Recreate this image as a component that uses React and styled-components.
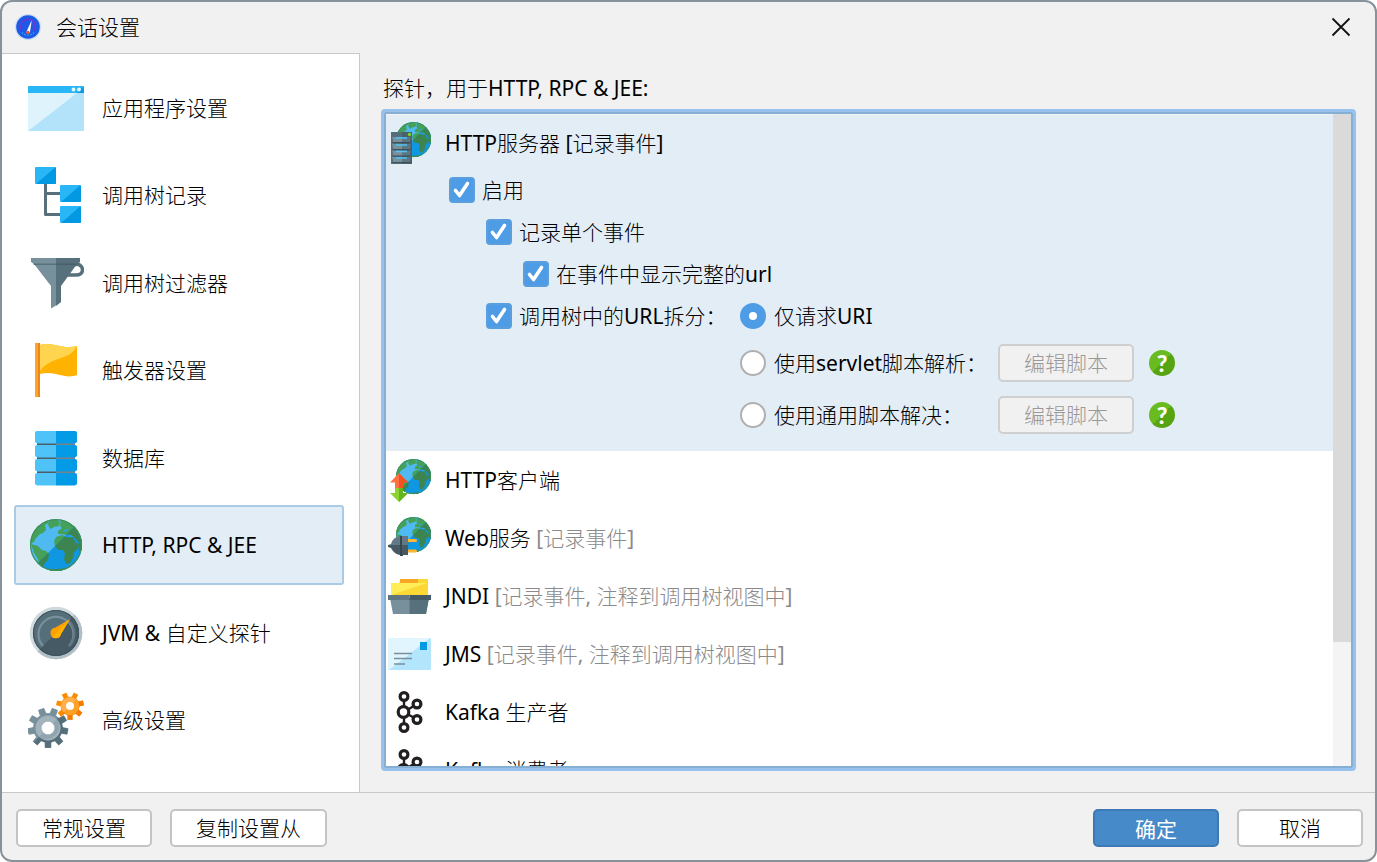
import React, { useId } from "react";
import styled, { createGlobalStyle, css } from "styled-components";

const GlobalStyle = createGlobalStyle`
  *, *::before, *::after { box-sizing: border-box; }
  body {
    margin: 0;
    background: #fff;
    color: #000;
    font: 400 21px/28px "Noto Sans", "Noto Sans CJK SC Light", "Noto Sans CJK SC", sans-serif;
  }
  button, input { font: inherit; color: inherit; margin: 0; }
`;

/* ---------- layout ---------- */

const Dialog = styled.div`
  display: flex;
  flex-direction: column;
  height: 100vh;
  overflow: hidden;
  background: #f1f1f1;
  border: 2px solid #87929a;
  border-radius: 12px;
`;

const TitleBar = styled.header`
  display: flex;
  align-items: center;
  gap: 15px;
  height: 51px;
  flex: none;
  padding: 0 24px 2px 13px;
`;

const Title = styled.h1`
  flex: 1;
  margin: 0;
  font-size: 21px;
  font-weight: inherit;
`;

const CloseButton = styled.button`
  display: grid;
  padding: 0;
  border: 0;
  background: none;
`;

const Body = styled.div`
  display: flex;
  flex: 1;
  min-height: 0;
`;

const Sidebar = styled.nav`
  display: flex;
  flex-direction: column;
  justify-content: space-between;
  flex: none;
  width: 358px;
  padding: 14px 15px 32px 12px;
  background: #fff;
  border: solid #c9c9c9;
  border-width: 1px 1px 0 0;
`;

const NavItem = styled.a`
  display: flex;
  align-items: center;
  gap: 18px;
  height: 80px;
  padding-left: 12px;
  border: 2px solid transparent;
  border-radius: 3px;
  color: inherit;
  text-decoration: none;
  ${(p) => p.$active && css`
    background: #e3edf6;
    border-color: #a9cbe5;
  `}
`;

const Main = styled.main`
  display: flex;
  flex-direction: column;
  flex: 1;
  min-width: 0;
  padding: 21px 19px 21px 21px;
`;

const Caption = styled.h2`
  margin: 0 0 7px;
  padding-left: 2px;
  font-size: 21px;
  font-weight: inherit;
`;

const ProbePanel = styled.div`
  display: flex;
  flex: 1;
  min-height: 0;
  background: #fff;
  border: 3px solid #97c2ec;
  border-radius: 4px;
  padding: 2px;
  box-shadow: inset 0 0 0 2px #86afd6;
`;

const ProbeList = styled.div`
  flex: 1;
  overflow: hidden;
`;

const Scrollbar = styled.div`
  width: 18px;
  background: #f4f4f4;
`;

const ScrollThumb = styled.div`
  height: 81%;
  background: #dadada;
`;

const ProbeRow = styled.div`
  display: flex;
  align-items: center;
  gap: 14px;
  height: 58px;
  padding-left: 2px;
`;

const SelectedProbe = styled.section`
  padding-bottom: 10px;
  background: #e3edf6;
  border-top: 1px solid #f4f4f4;
  ${ProbeRow} { height: 54px; padding-top: 2px; }
`;

const Hint = styled.span`
  color: #8a8a8a;
`;

const Options = styled.div`
  padding-left: 63px;
`;

const OptionRow = styled.div`
  display: flex;
  align-items: center;
  height: 42px;
  padding-left: ${(p) => (p.$level || 0) * 37}px;
`;

const SplitGrid = styled.div`
  display: grid;
  grid-template-columns: 254px 258px auto auto 1fr;
  grid-template-rows: 42px 52px 52px;
  align-items: center;
  padding-left: 37px;
`;

const Label = styled.label`
  display: inline-flex;
  align-items: center;
  gap: 7px;
  white-space: nowrap;
`;

const RadioCell = styled.div`
  display: flex;
  grid-column: 2;
  ${Label} { gap: 8px; }
`;

const Control = styled.span`
  display: grid;
  > * { grid-area: 1 / 1; }
  > svg { pointer-events: none; }
`;

const CheckInput = styled.input`
  appearance: none;
  width: 26px;
  height: 26px;
  background: #fff;
  border: 2px solid #b0b0b0;
  border-radius: 4px;
  &:checked { background: #4e9be6; border-color: #5a9edd; }
  &:not(:checked) + svg { display: none; }
`;

const RadioInput = styled.input`
  appearance: none;
  width: 26px;
  height: 26px;
  background: #fff;
  border: 2px solid #b0b0b0;
  border-radius: 50%;
  &:checked { border: 9px solid #4e9be6; }
`;

const Button = styled.button`
  height: 38px;
  min-width: 126px;
  padding: 0 24px;
  white-space: nowrap;
  background: #fff;
  border: 2px solid #c4c4c4;
  border-radius: 5px;
  &:disabled { background: #f1f1f1; border-color: #cfcfcf; color: #999; }
  ${(p) => p.$primary && css`
    background: #478ac9;
    border-color: #3d79b3;
    color: #fff;
    font-family: "Noto Sans CJK SC", sans-serif;
  `}
`;

const HelpButton = styled.button`
  width: 26px;
  height: 26px;
  margin-left: 15px;
  padding: 0;
  border: 0;
  border-radius: 50%;
  background: linear-gradient(135deg, #6abb1f 50%, #56a412 50%);
  color: #fff;
  font: 900 23px/26px Lato, sans-serif;
`;

const Footer = styled.footer`
  display: flex;
  align-items: center;
  gap: 18px;
  height: 68px;
  flex: none;
  padding: 2px 12px 0 14px;
  border-top: 1px solid #c9c9c9;
`;

const Spacer = styled.div`
  flex: 1;
`;

/* ---------- icons ---------- */

const Svg = ({ size, children }) => (
  <svg width={size} height={size} viewBox={`0 0 ${size} ${size}`} aria-hidden="true" style={{ flex: "none" }}>
    {children}
  </svg>
);

const LAND =
  "M0 25 1 17 5 9 11 3 18 0 18 4 15 6 16 11 13 14 10 15 6 19 4 23Z" +
  "M19 1 26 0 30 3 29 7 24 8 21 10 19 8 18 5Z" +
  "M1 25 8 27 12 31 16 32 19 35 18 41 14 45 12 51 9 45 8 40 4 34Z" +
  "M31 0 40 2 48 9 53 20 53 30 49 33 49 24 45 19 39 18 40 15 36 16 31 15 28 15 28 12 32 9 30 7Z" +
  "M26 18 32 16 36 18 43 19 46 24 50 25 48 30 44 33 43 39 40 44 36 45 34 40 35 35 33 31 28 31 25 27 24 22Z" +
  "M14 51 26 50 40 49 36 53 14 53Z";

function Globe() {
  const id = useId();
  return (
    <>
      <clipPath id={`${id}c`}><circle cx="26" cy="26" r="26" /></clipPath>
      <clipPath id={`${id}d`}><path d="M52 0V52H0Z" /></clipPath>
      <g clipPath={`url(#${id}c)`}>
        <path d="M0 0H52V52H0Z" fill="#4fbaf2" />
        <path d={LAND} fill="#45a05a" />
        <g clipPath={`url(#${id}d)`}>
          <path d="M0 0H52V52H0Z" fill="#0f97e2" />
          <path d={LAND} fill="#3c8550" />
        </g>
        <path d="M33 12l3-2 3 0-4 3zM36 17l5-1 3 2-5 0z" fill="#2aa4e8" />
      </g>
      <circle cx="26" cy="26" r="25.4" fill="none" stroke="#3f9158" strokeWidth="1.2" />
    </>
  );
}

function gear(cx, cy, outer, inner, teeth) {
  const pts = [];
  const step = (Math.PI * 2) / teeth;
  for (let i = 0; i < teeth; i += 1) {
    const a = Math.PI / 2 + i * step;
    [[-0.29, inner], [-0.2, outer], [0.2, outer], [0.29, inner]].forEach(([k, r]) => {
      pts.push(`${(cx + r * Math.cos(a + k * step)).toFixed(2)} ${(cy + r * Math.sin(a + k * step)).toFixed(2)}`);
    });
  }
  return `M${pts.join("L")}Z`;
}

const AppLogo = () => (
  <Svg size={26}>
    <circle cx="13" cy="13" r="13" fill="#c9def3" />
    <circle cx="13" cy="13" r="11.8" fill="#1f5ae6" />
    <path d="M6.5 16a7.3 7.3 0 1 1 13 0" fill="none" stroke="#7a30cf" strokeWidth="1.4" />
    <path d="M7 18.500a8 8 0 0 0 12 0" fill="none" stroke="#25a9e8" strokeWidth="1.4" strokeDasharray="1.5 1.500" />
    <path d="M11.200 18.500 16.800 6 14.800 19Z" fill="#fff" />
    <circle cx="13" cy="18.500" r="1.700" fill="#f1522d" />
  </Svg>
);

const WindowIcon = () => (
  <Svg size={56}>
    <path d="M0 7a1 1 0 0 1 1-1H55a1 1 0 0 1 1 1V13H0Z" fill="#29b6f6" />
    <path d="M49 13 56 6.500V13Z" fill="#0b9be6" />
    <path d="M0 13H56V51H0Z" fill="#b3e3fb" />
    <path d="M0 13H49L0 51Z" fill="#dff3fd" />
    <circle cx="45.500" cy="9.500" r="1.900" fill="#e5f6fe" />
    <circle cx="51" cy="9.500" r="1.900" fill="#e5f6fe" />
  </Svg>
);

const TreeIcon = () => (
  <Svg size={56}>
    <path d="M17.500 16V47.500H34M17.500 26.500H34" fill="none" stroke="#58707c" strokeWidth="3" strokeLinejoin="round" />
    {[[7, 0], [32, 18], [32, 39]].map(([x, y]) => (
      <g key={`${x}${y}`} transform={`translate(${x} ${y})`}>
        <rect width="21" height="17" rx="1" fill="#29b6f6" />
        <path d="M20 .500 21 1V16a1 1 0 0 1-1 1H1Z" fill="#0398e2" />
      </g>
    ))}
  </Svg>
);

const FilterIcon = () => (
  <Svg size={56}>
    <path d="M46 10c4-2.500 8.500 1 8.500 4.700S51.500 20 48 20H39" fill="none" stroke="#56707c" strokeWidth="3.500" />
    <path d="M3 3H28V50.500L23 53.500V31L6 9 3 7Z" fill="#78909c" />
    <path d="M28 3H52V7L49 9 33 31V47L28 51Z" fill="#56707c" />
    <path d="M5 8.500H28V10H6Z" fill="#56707c" />
    <path d="M28 8.500H49L48 10H28Z" fill="#48606c" />
  </Svg>
);

const FlagIcon = () => (
  <Svg size={56}>
    <path d="M12 3C26-1 32 8 49 4V33C36 38 27 28 12 32Z" fill="#ffb300" />
    <path d="M12 3C26-1 32 8 49 4C42 19 22 14 12 29Z" fill="#ffd54f" />
    <path d="M7 1H10V55H7Z" fill="#f9a825" />
    <path d="M10 1H12V55H10Z" fill="#f5821f" />
  </Svg>
);

const DatabaseIcon = () => (
  <Svg size={56}>
    <path d="M9 10H28V50H9Z" fill="#4a5f6a" />
    <path d="M28 10H47V50H28Z" fill="#78838a" />
    {[1, 15, 29, 43].map((y) => (
      <g key={y} transform={`translate(7 ${y})`}>
        <path d="M21 0V12.500H2L0 11V1.500Q0 0 2 0Z" fill="#4fc3f7" />
        <path d="M21 0V12.500H40L42 11V1.500Q42 0 40 0Z" fill="#039be5" />
      </g>
    ))}
  </Svg>
);

const GlobeIcon = () => (
  <Svg size={56}><g transform="translate(2 2)"><Globe /></g></Svg>
);

const GaugeIcon = () => (
  <Svg size={56}>
    <circle cx="28" cy="28" r="26.300" fill="#cfd8dc" />
    <path d="M46.600 9.400a26.300 26.300 0 0 1-37.200 37.200Z" fill="#b0bec5" />
    <circle cx="28" cy="28" r="23" fill="#546e7a" />
    <path d="M44.300 11.700a23 23 0 0 1-32.600 32.600Z" fill="#455a64" />
    <circle cx="28" cy="28" r="22.500" fill="none" stroke="#3f525c" strokeWidth="1.200" />
    <path d="M15 41A17.500 17.500 0 1 1 41 41" fill="none" stroke="#78909c" strokeWidth="2.200" />
    <path d="M41 16A17.500 17.500 0 0 1 41 41" fill="none" stroke="#607985" strokeWidth="2.200" />
    <path d="M42 14 33 29A5.300 5.300 0 1 1 27 22.800Z" fill="#ffa000" />
    <path d="M42 14 33 29A5.300 5.300 0 0 1 24.500 32Z" fill="#ffb300" />
  </Svg>
);

const GearsIcon = () => {
  const id = useId();
  return (
    <Svg size={56}>
      <clipPath id={id}><path d="M0 56 40 16 56 56Z" /></clipPath>
      <clipPath id={`${id}s`}><path d="M28 28 56 0V28Z" /></clipPath>
      <path d={gear(20, 36, 20, 14.500, 9)} fill="#78909c" stroke="#78909c" strokeLinejoin="round" />
      <path d={gear(20, 36, 20, 14.500, 9)} fill="#546e7a" clipPath={`url(#${id})`} />
      <circle cx="20" cy="36" r="9.500" fill="none" stroke="#a3b3bb" strokeWidth="6" />
      <path d="M29 27a13 13 0 0 1-18 18l4-4a7 7 0 0 0 10-10Z" fill="#90a4ae" />
      <circle cx="20" cy="36" r="6.500" fill="#fff" />
      <path d={gear(42, 14, 14, 9.500, 7)} fill="#fb8c00" />
      <path d={gear(42, 14, 14, 9.500, 7)} fill="#f57c00" clipPath={`url(#${id}s)`} />
      <circle cx="42" cy="14" r="6.500" fill="none" stroke="#ffb04d" strokeWidth="5" />
      <path d="M48.400 7.600a9 9 0 0 1-12.800 12.800l3.500-3.500a4 4 0 0 0 5.800-5.800Z" fill="#ffa026" />
      <circle cx="42" cy="14" r="4" fill="#fff" />
    </Svg>
  );
};

const SmallGlobe = () => <g transform="translate(8 0) scale(.675)"><Globe /></g>;

const ServerIcon = () => (
  <Svg size={43}>
    <SmallGlobe />
    <path d="M3 10H24V42H3Z" fill="#546e7a" />
    <path d="M14 10H24V42H14Z" fill="#4a616c" />
    {[15, 22, 28.500, 35].map((y) => (
      <g key={y}>
        <path d={`M4 ${y}H23L22 ${y + 6}H5Z`} fill="#3c4f59" />
        <path d={`M4 ${y}H14V${y + 5}H5Z`} fill="#78909c" />
        <path d={`M14 ${y}H23L22 ${y + 5}H14Z`} fill="#5d7682" />
        <path d={`M8 ${y + 1}H19`} stroke="#4fc3f7" strokeWidth="1.500" />
      </g>
    ))}
    <circle cx="21.500" cy="12.500" r="1.700" fill="#7ed321" />
  </Svg>
);

const ClientIcon = () => (
  <Svg size={43}>
    <SmallGlobe />
    <path d="M11 14 20 23.500H15V29H7V23.500H2Z" fill="#ff7043" />
    <path d="M11 14 20 23.500H15V29H11Z" fill="#f4511e" />
    <path d="M11 43 20 34H15V29H7V34H2Z" fill="#8bd42f" />
    <path d="M11 43 20 34H15V29H11Z" fill="#62b51c" />
  </Svg>
);

const WebIcon = () => (
  <Svg size={43}>
    <SmallGlobe />
    <path d="M20 22H27.500a1.200 1.200 0 0 1 0 3H20ZM20 32.500H27.500a1.200 1.200 0 0 1 0 3H20Z" fill="#ffb62e" />
    <path d="M0 28 3 27Q5 20 12 19V28Z" fill="#607985" />
    <path d="M0 28V30L3 31Q6 37 12 38V28Z" fill="#455a64" />
    <path d="M12 19H15V39H12Z" fill="#37474f" />
    <path d="M14 19H20V28H14Z" fill="#607985" />
    <path d="M14 28H20V38H14Z" fill="#455a64" />
  </Svg>
);

const JndiIcon = () => (
  <Svg size={43}>
    <path d="M3 8H11L13 4H40V21H3Z" fill="#fdd835" />
    <path d="M3 8H39L3 20Z" fill="#ffee58" />
    <path d="M12 4H30V8H12Z" fill="#f9a825" />
    <path d="M2 23H41L38 39H5Z" fill="#78909c" />
    <path d="M21.500 23H41L38 39H21.500Z" fill="#56707c" />
    <path d="M0 20H21.500V25H0Z" fill="#607681" />
    <path d="M21.500 20H43V25H21.500Z" fill="#455a64" />
  </Svg>
);

const JmsIcon = () => (
  <Svg size={43}>
    <rect y="5" width="43" height="32" rx="1" fill="#b3e5fc" />
    <path d="M0 6a1 1 0 0 1 1-1H42L1 37 0 36Z" fill="#e1f5fe" />
    <path d="M32 9H39V17H32Z" fill="#0398e2" />
    <path d="M6 20.500H24M6 25.500H24M6 31H17" stroke="#78909c" strokeWidth="1.500" />
  </Svg>
);

const KafkaIcon = () => (
  <Svg size={43}>
    <path d="M16 5.500V36.500M16 21 29 13M16 21 29 28.500" stroke="#231f20" strokeWidth="2.400" />
    <g fill="#fff" stroke="#231f20" strokeWidth="3.200">
      <circle cx="16" cy="5.500" r="3.900" />
      <circle cx="29" cy="13" r="3.900" />
      <circle cx="29" cy="28.500" r="3.900" />
      <circle cx="16" cy="36.500" r="3.900" />
      <circle cx="15.500" cy="21" r="5.300" />
    </g>
  </Svg>
);

/* ---------- controls ---------- */

const Checkbox = ({ children }) => (
  <Label>
    <Control>
      <CheckInput type="checkbox" defaultChecked />
      <svg width="26" height="26" viewBox="0 0 26 26" aria-hidden="true">
        <path d="M6.500 13.500 10.500 18.500 18.500 6.500" fill="none" stroke="#fff" strokeWidth="3.600" strokeLinecap="round" strokeLinejoin="round" />
      </svg>
    </Control>
    {children}
  </Label>
);

const Radio = ({ children, checked }) => (
  <RadioCell>
    <Label>
      <RadioInput type="radio" name="url-split" defaultChecked={checked} />
      {children}
    </Label>
  </RadioCell>
);

const ScriptActions = () => (
  <>
    <Button disabled>编辑脚本</Button>
    <HelpButton aria-label="帮助">?</HelpButton>
  </>
);

const NAV = [
  ["应用程序设置", WindowIcon],
  ["调用树记录", TreeIcon],
  ["调用树过滤器", FilterIcon],
  ["触发器设置", FlagIcon],
  ["数据库", DatabaseIcon],
  ["HTTP, RPC & JEE", GlobeIcon],
  ["JVM & 自定义探针", GaugeIcon],
  ["高级设置", GearsIcon],
];

const PROBES = [
  ["HTTP客户端", "", ClientIcon],
  ["Web服务", "[记录事件]", WebIcon],
  ["JNDI", "[记录事件, 注释到调用树视图中]", JndiIcon],
  ["JMS", "[记录事件, 注释到调用树视图中]", JmsIcon],
  ["Kafka 生产者", "", KafkaIcon],
  ["Kafka 消费者", "", KafkaIcon],
];

export default function App() {
  return (
    <Dialog role="dialog" aria-label="会话设置">
      <GlobalStyle />
      <TitleBar>
        <AppLogo />
        <Title>会话设置</Title>
        <CloseButton aria-label="关闭">
          <svg width="20" height="20" viewBox="0 0 20 20">
            <path d="M1.500 1.500 18.500 18.500M18.500 1.500 1.500 18.500" stroke="#111" strokeWidth="1.800" />
          </svg>
        </CloseButton>
      </TitleBar>
      <Body>
        <Sidebar>
          {NAV.map(([name, Icon]) => (
            <NavItem key={name} href="#" $active={Icon === GlobeIcon}>
              <Icon />
              {name}
            </NavItem>
          ))}
        </Sidebar>
        <Main>
          <Caption>探针，用于HTTP, RPC &amp; JEE:</Caption>
          <ProbePanel>
            <ProbeList>
              <SelectedProbe>
                <ProbeRow><ServerIcon />HTTP服务器 [记录事件]</ProbeRow>
                <Options>
                  <OptionRow><Checkbox>启用</Checkbox></OptionRow>
                  <OptionRow $level={1}><Checkbox>记录单个事件</Checkbox></OptionRow>
                  <OptionRow $level={2}><Checkbox>在事件中显示完整的url</Checkbox></OptionRow>
                  <SplitGrid>
                    <Checkbox>调用树中的URL拆分：</Checkbox>
                    <Radio checked>仅请求URI</Radio>
                    <Radio>使用servlet脚本解析：</Radio>
                    <ScriptActions />
                    <Radio>使用通用脚本解决：</Radio>
                    <ScriptActions />
                  </SplitGrid>
                </Options>
              </SelectedProbe>
              {PROBES.map(([name, hint, Icon]) => (
                <ProbeRow key={name}>
                  <Icon />
                  <span>{name} {hint && <Hint>{hint}</Hint>}</span>
                </ProbeRow>
              ))}
            </ProbeList>
            <Scrollbar><ScrollThumb /></Scrollbar>
          </ProbePanel>
        </Main>
      </Body>
      <Footer>
        <Button>常规设置</Button>
        <Button>复制设置从</Button>
        <Spacer />
        <Button $primary>确定</Button>
        <Button>取消</Button>
      </Footer>
    </Dialog>
  );
}
